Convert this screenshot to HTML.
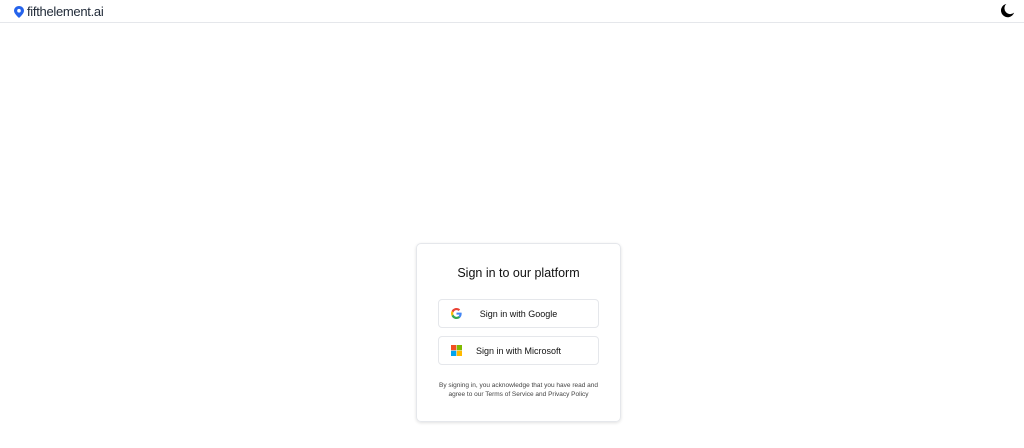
<!DOCTYPE html>
<html><head><meta charset="utf-8"><style>
*{margin:0;padding:0;box-sizing:border-box}
body{width:1024px;height:448px;background:#fff;font-family:"Liberation Sans",Arial,sans-serif;position:relative;overflow:hidden;color:#111}
.hdr{position:absolute;left:0;top:0;width:1024px;height:23px;border-bottom:1px solid #e5e7eb}
.logo{position:absolute;left:14px;top:4px;display:flex;align-items:center;font-size:13px;color:#1f2937;letter-spacing:-0.3px}
.logo svg{margin-right:3px}
.moon{position:absolute;left:1000px;top:3px}
.card{position:absolute;left:416px;top:243px;width:205px;height:179px;border:1px solid #e5e7eb;border-radius:5px;box-shadow:0 1px 3px rgba(0,0,0,.12)}
h1{position:absolute;left:0;width:100%;top:22px;text-align:center;font-size:12.5px;font-weight:normal;color:#111}
.btn{position:absolute;left:21px;width:161px;height:29px;border:1px solid #e5e7eb;border-radius:4px;font-size:9px;color:#111}
.btn svg{position:absolute;left:12px;top:8px}
.btn span{position:absolute;left:0;width:100%;top:9px;text-align:center}
.legal{position:absolute;left:0;width:100%;top:137px;text-align:center;font-size:6.5px;line-height:9px;color:#444}
</style></head><body>
<div class="hdr">
<div class="logo"><svg width="10" height="12" viewBox="0 0 10 12"><path d="M5 0C2.2 0 0 2.1 0 4.8 0 8 5 12 5 12s5-4 5-7.2C10 2.1 7.8 0 5 0z" fill="#2563eb"/><circle cx="5" cy="4.7" r="1.8" fill="#fff"/></svg>fifthelement.ai</div>
<svg class="moon" width="15" height="15" viewBox="0 0 14 14"><path d="M6 0.8A6.3 6.3 0 1 0 13.2 9 5 5 0 0 1 6 0.8z" fill="#000"/></svg>
</div>
<div class="card">
<h1>Sign in to our platform</h1>
<div class="btn" style="top:55px"><svg width="11" height="11" viewBox="0 0 48 48"><path fill="#EA4335" d="M24 9.5c3.5 0 6.6 1.2 9.1 3.6l6.8-6.8C35.8 2.4 30.3 0 24 0 14.6 0 6.6 5.4 2.7 13.3l7.9 6.1C12.5 13.6 17.800 9.5 24 9.5z"/><path fill="#4285F4" d="M46.5 24.5c0-1.6-.1-3.1-.4-4.5H24v9h12.7c-.6 3-2.3 5.5-4.8 7.2l7.7 6c4.5-4.2 6.9-10.3 6.9-17.7z"/><path fill="#FBBC05" d="M10.5 28.6c-.5-1.4-.8-3-.8-4.6s.3-3.2.8-4.6l-7.9-6.1C1 16.6 0 20.2 0 24s1 7.4 2.7 10.7l7.8-6.1z"/><path fill="#34A853" d="M24 48c6.5 0 11.9-2.1 15.9-5.8l-7.700-6c-2.2 1.5-5 2.3-8.2 2.3-6.2 0-11.5-4.2-13.4-9.9l-7.9 6.1C6.6 42.6 14.6 48 24 48z"/></svg><span>Sign in with Google</span></div>
<div class="btn" style="top:92px"><svg width="11" height="11" viewBox="0 0 22 22"><rect width="10.5" height="10.5" fill="#F25022"/><rect x="11.5" width="10.5" height="10.5" fill="#7FBA00"/><rect y="11.5" width="10.5" height="10.5" fill="#00A4EF"/><rect x="11.5" y="11.5" width="10.5" height="10.5" fill="#FFB900"/></svg><span>Sign in with Microsoft</span></div>
<div class="legal">By signing in, you acknowledge that you have read and<br>agree to our Terms of Service and Privacy Policy</div>
</div>
</body></html>
